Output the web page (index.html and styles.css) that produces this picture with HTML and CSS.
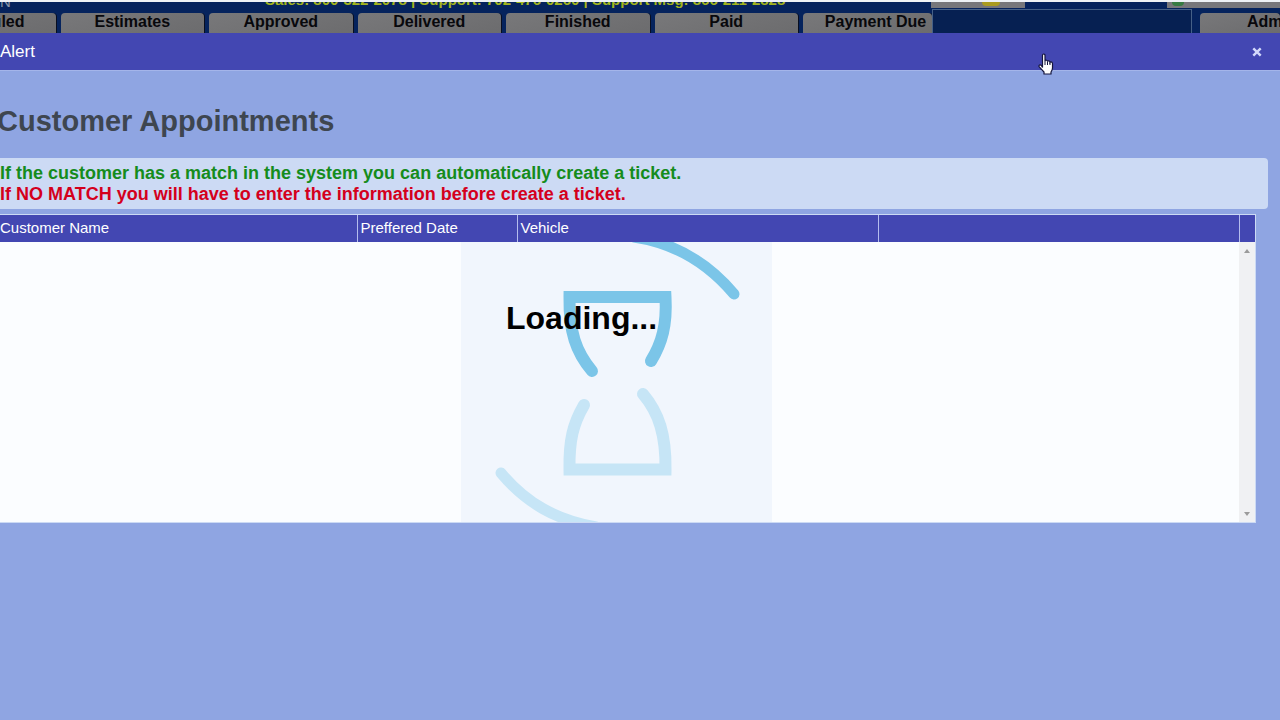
FILE: index.html
```html
<!DOCTYPE html>
<html lang="en">
<head>
<meta charset="utf-8">
<title>Customer Appointments</title>
<link rel="stylesheet" href="styles.css">
</head>
<body>
<header class="topbar">
  <div class="contact">
    <span class="brand">N</span>
    <p class="phones">Sales: 800-322-2078 | Support: 702-476-0260 | Support Msg: 866-211-2828</p>
    <span class="notice"><i class="bulb"></i></span>
    <span class="status"><i class="dot"></i></span>
  </div>
  <nav class="nav">
    <div class="tabs">
      <button class="tab tab-first">Scheduled</button>
      <button class="tab">Estimates</button>
      <button class="tab">Approved</button>
      <button class="tab">Delivered</button>
      <button class="tab">Finished</button>
      <button class="tab">Paid</button>
    </div>
    <button class="tab tab-due">Payment Due</button>
    <div class="panel"></div>
    <button class="tab tab-admin">Admin</button>
  </nav>
</header>
<main class="dialog">
  <div class="titlebar">
    <span>Alert</span>
    <button class="close" aria-label="Close">
      <svg width="10" height="10" viewBox="0 0 10 10"><path d="M1.3 1.3 8.7 8.7M8.7 1.3 1.3 8.7" stroke="#d3d9fb" stroke-width="2.4"/></svg>
    </button>
  </div>
  <h1 class="heading">Customer Appointments</h1>
  <div class="info">
    <p class="match">If the customer has a match in the system you can automatically create a ticket.</p>
    <p class="nomatch">If NO MATCH you will have to enter the information before create a ticket.</p>
  </div>
  <section class="grid">
    <table class="columns">
      <colgroup><col class="c-name"><col class="c-date"><col class="c-vehicle"><col><col class="c-scroll"></colgroup>
      <thead><tr><th>Customer Name</th><th>Preffered Date</th><th>Vehicle</th><th></th><th></th></tr></thead>
    </table>
    <div class="rows">
      <div class="content">
        <div class="loader">
          <svg class="hourglass" viewBox="461 242 311 280" width="311" height="280" fill="none" stroke-width="12" stroke-linecap="round">
            <g stroke="#7bc5e8">
              <path d="M592 371C576 352 569 332 569.500 297H665.500C667 325 662 343 651 361"/>
              <path stroke-width="11" d="M634 237C675 243 707 262 734 294"/>
            </g>
            <g stroke="#c6e5f6">
              <path d="M584 405C573 424 569 440 569.500 469.500H665.500C666 435 659 413 643 394"/>
              <path stroke-width="11" d="M501 473C526 503 556 520 596 527"/>
            </g>
          </svg>
          <strong class="loading">Loading...</strong>
        </div>
      </div>
      <div class="scrollbar"><i class="up"></i><i class="down"></i></div>
    </div>
  </section>
</main>
<svg class="cursor" width="16" height="22" viewBox="0 0 16 22"><path d="M4.500 14.500V2.500Q4.500 1 5.800 1Q7 1 7 2.500V8Q7.400 6.600 8.600 7.200Q9.500 7.600 9.500 8.500Q10 7.400 11.200 8Q12 8.400 12 9.400Q12.600 8.500 13.700 9.100Q14.500 9.600 14.500 10.800V15Q14.500 17 13 19V21H6V19L1.500 14.200Q.4 12.800 1.500 12Q2.600 11.500 3.700 12.900Z" fill="#fff" stroke="#14143c" stroke-width="1.200"/><path d="M7 8V12M9.500 8.500V12M12 9.500V12" stroke="#14143c"/></svg>
</body>
</html>
```
FILE: styles.css
```css
* { box-sizing: border-box; }
body {
  margin: 0;
  min-height: 100vh;
  display: flex;
  flex-direction: column;
  overflow: hidden;
  background: #8fa5e2;
  font-family: "Liberation Sans", Arial, sans-serif;
}
p, h1 { margin: 0; }
button { border: 0; font-family: inherit; }

.topbar { background: #05235d; border-top: 2px solid #eef2f6; }
.contact {
  height: 7px;
  display: flex;
  align-items: flex-end;
  overflow: hidden;
}
.brand { width: 265px; color: #8793a6; font-size: 15px; line-height: 14px; }
.phones {
  flex: 1;
  min-width: 0;
  padding-bottom: 2px;
  color: #a3b51d;
  font-size: 15px;
  font-weight: bold;
  line-height: 14px;
  white-space: nowrap;
}
.notice, .status { align-self: flex-start; height: 6px; background: #77777b; overflow: hidden; }
.notice { width: 94px; margin-right: 142px; }
.status { width: 113px; }
.bulb, .dot { display: block; height: 4px; border-radius: 0 0 8px 8px; }
.bulb { width: 18px; margin-left: 51px; background: #a99b20; }
.dot { width: 12px; margin-left: 5px; background: #367b42; }

.nav { height: 24px; display: flex; align-items: flex-end; overflow: hidden; }
.tabs {
  flex: 1;
  display: grid;
  grid-template-columns: repeat(6, minmax(0, 1fr));
  gap: 5px;
  margin: 0 5px 0 -88px;
}
.tab {
  height: 20px;
  padding: 0 0 2px;
  border-radius: 4px 4px 0 0;
  background: linear-gradient(165deg, #78787a, #6c6c6e);
  box-shadow: 1px 0 #080e20;
  color: #08080c;
  font-size: 16px;
  font-weight: bold;
  line-height: 18px;
  white-space: nowrap;
}
.tab-first { text-align: right; padding-right: 31px; }
.tab-due { width: 129px; padding-left: 16px; }
.panel { width: 260px; height: 24px; margin-right: 8px; background: #062052; border: 1px solid #456087; border-bottom: 0; }
.tab-admin { width: 80px; padding-left: 47px; text-align: left; }

.dialog { flex: 1; }
.titlebar {
  height: 38px;
  display: flex;
  align-items: center;
  justify-content: space-between;
  padding: 0 18px 0 0;
  background: #4347b2;
  border-bottom: 1px solid #a4b5ea;
  color: #fff;
  font-size: 17px;
}
.close { display: flex; padding: 0; background: none; }
.heading { margin: 33px 0 19px -3px; color: #3e4650; font-size: 29px; line-height: 35px; }
.info {
  margin-right: 12px;
  padding: 5px 0 4px;
  border-radius: 0 4px 4px 0;
  background: #ccdaf4;
  font-size: 18px;
  font-weight: bold;
  line-height: 21px;
}
.match { color: #158c1c; }
.nomatch { color: #d4001c; }

.grid { margin: 5px 24px 0 0; border: 1px solid #ccdaf4; border-left: 0; }
.columns { width: 100%; border-collapse: collapse; table-layout: fixed; background: #4347b2; }
.columns th {
  height: 27px;
  padding: 0 0 2px 3px;
  border-right: 1px solid #b5bdee;
  color: #fff;
  font-size: 15px;
  font-weight: normal;
  line-height: 18px;
  text-align: left;
  white-space: nowrap;
}
.columns th:first-child { padding-left: 0; }
.columns th:last-child { border-right: 0; }
.c-name { width: 357px; }
.c-date { width: 160px; }
.c-vehicle { width: 361px; }
.c-scroll { width: 16px; }
.rows { display: flex; height: 280px; background: #fbfdff; }
.content { flex: 1; display: flex; justify-content: center; }
.loader { position: relative; background: #f1f6fd; margin-right: 6px; }
.hourglass { display: block; }
.loading {
  position: absolute;
  left: 45px;
  top: 58px;
  color: #000;
  font-size: 32px;
  line-height: 36px;
}
.scrollbar {
  width: 16px;
  display: flex;
  flex-direction: column;
  justify-content: space-between;
  align-items: center;
  padding: 7px 0 6px;
  background: #f0f1f3;
}
.up, .down { border: 3px solid transparent; }
.up { border-top: 0; border-bottom: 4px solid #9b9b9b; }
.down { border-bottom: 0; border-top: 4px solid #9b9b9b; }
.cursor { position: absolute; left: 1038px; top: 53px; }
```
